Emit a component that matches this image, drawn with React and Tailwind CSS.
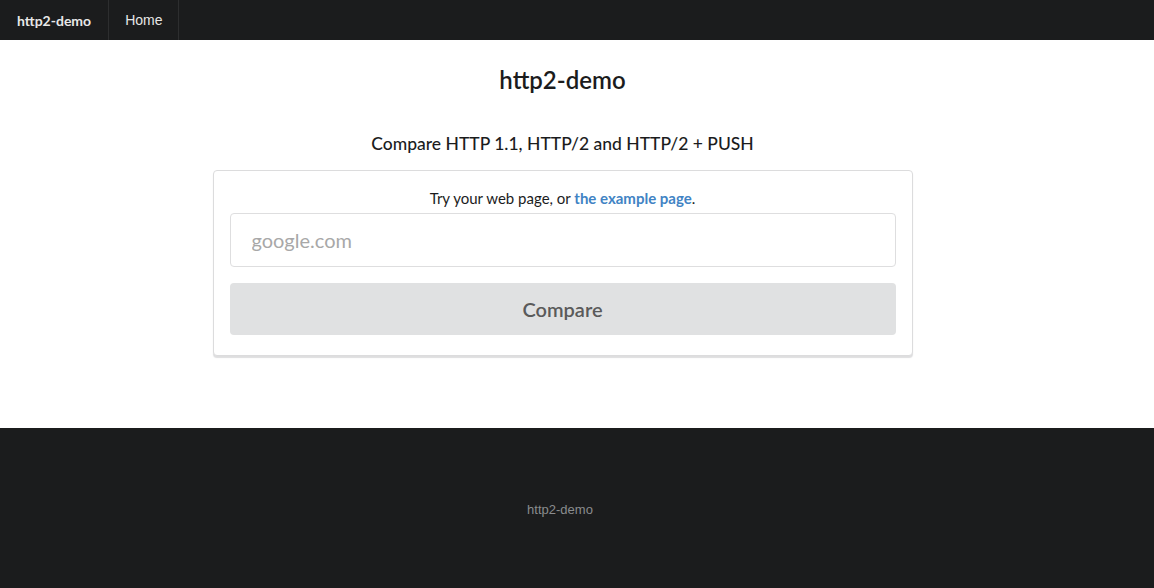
export default function App() {
  return (
    <div className="min-h-[588px] flex flex-col bg-white" style={{ fontFamily: 'Lato, "Liberation Sans", sans-serif' }}>
      {/* Navbar */}
      <div className="h-10 bg-[#1b1c1d] flex items-stretch">
        <div className="flex items-center px-[17px] border-r border-[#2d2e2f] text-[14px] font-bold text-[#e8e8e8]">
          http2-demo
        </div>
        <div className="flex items-center px-[16px] border-r border-[#2d2e2f] text-[14px] text-[#e6e6e6]" style={{ fontFamily: '"Liberation Sans", Arial, sans-serif' }}>
          Home
        </div>
      </div>

      {/* Main */}
      <div className="flex flex-col items-center h-[388px] pr-[29px]">
        <h1 className="mt-[22px] text-[24px] leading-[36px] font-semibold text-[#1b1c1d]">http2-demo</h1>
        <h3 className="mt-[33px] text-[17.5px] leading-[26px] font-medium text-[#1b1c1d]">Compare HTTP 1.1, HTTP/2 and HTTP/2 + PUSH</h3>
        <div className="w-[700px] mt-[13px] border border-[#dcdcdd] rounded shadow-[0_2px_1px_0_rgba(34,36,38,0.15)] bg-white px-4 pt-4 pb-5">
          <p className="text-center text-[15px] leading-[22px] text-[#1b1c1d]">
            Try your web page, or <a className="font-bold text-[#4183c4]">the example page</a>.
          </p>
          <input
            className="mt-[4px] w-full h-[54px] border border-[#dededf] rounded pl-[21px] pr-5 text-[20px] placeholder-[#a8a8a8] outline-none"
            placeholder="google.com"
            style={{ fontFamily: 'Lato, sans-serif' }}
          />
          <button className="mt-[16px] w-full h-[52px] rounded bg-[#e0e1e2] text-[20px] font-semibold text-[#5a5a5a]">
            Compare
          </button>
        </div>
      </div>

      {/* Footer */}
      <div className="h-[160px] bg-[#1b1c1d] flex items-center justify-center pr-[34px]">
        <span className="text-[13px] text-[#8a8c8e] translate-y-[2px]" style={{ fontFamily: '"Liberation Sans", Arial, sans-serif' }}>http2-demo</span>
      </div>
    </div>
  )
}
